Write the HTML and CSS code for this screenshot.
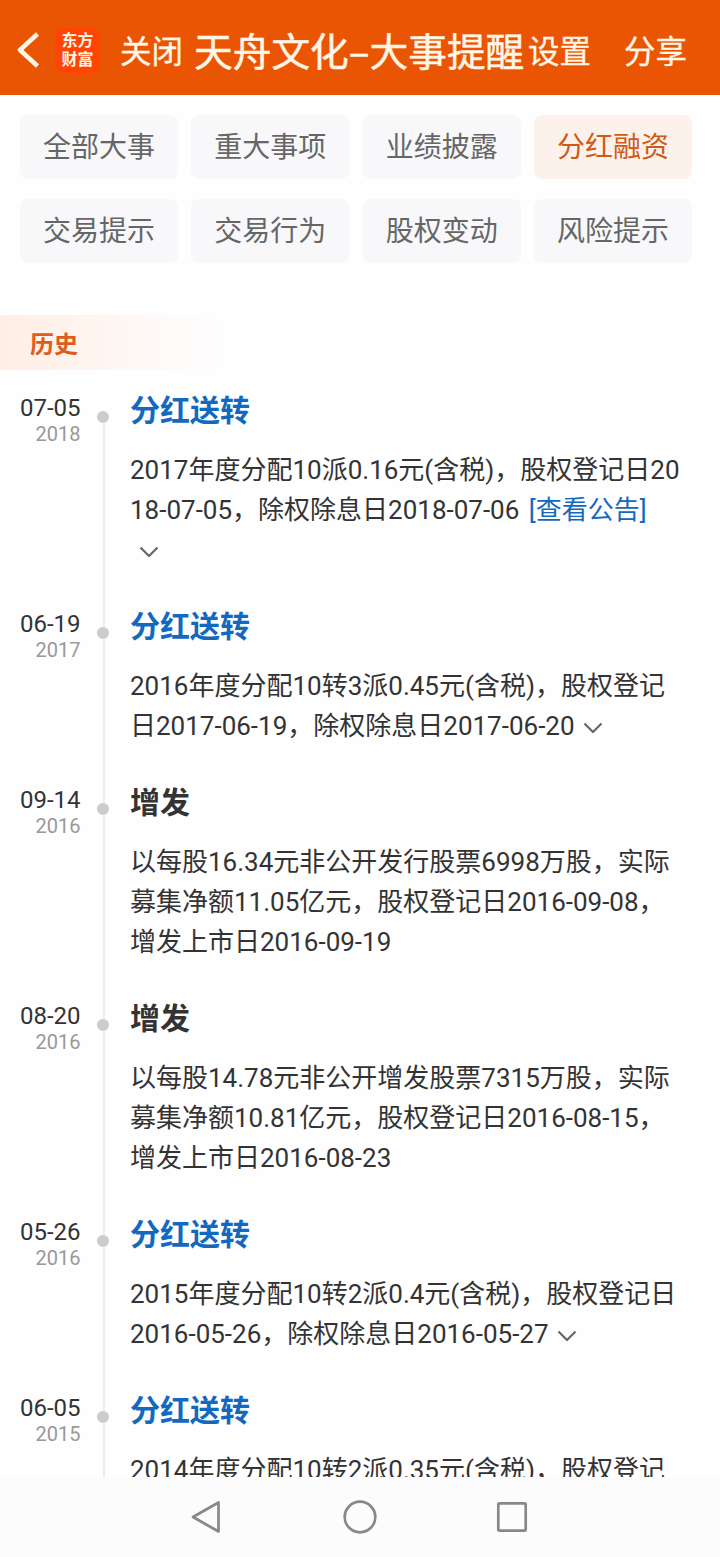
FILE: index.html
```html
<!DOCTYPE html>
<html lang="zh-CN">

<head>
    <meta charset="UTF-8">
    <meta name="viewport" content="width=device-width, initial-scale=1.0">
    <title>天舟文化–大事提醒</title>
    <link rel="stylesheet" href="styles.css">
</head>

<body>
    <header>
        <svg class="back" width="24" height="38" viewBox="0 0 24 38"><path d="M22.5 3L5 19L22.5 35"/></svg>
        <div class="logo"><span>东方</span><span>财富</span></div>
        <span class="close">关闭</span>
        <h1>天舟文化–大事提醒</h1>
        <span class="setting">设置</span>
        <span class="share">分享</span>
    </header>

    <main>
        <nav class="tabs">
            <a>全部大事</a>
            <a>重大事项</a>
            <a>业绩披露</a>
            <a class="active">分红融资</a>
            <a>交易提示</a>
            <a>交易行为</a>
            <a>股权变动</a>
            <a>风险提示</a>
        </nav>

        <h2 class="history">历史</h2>

        <div class="timeline">
            <section class="item">
                <div class="date">07-05<small>2018</small></div>
                <div class="axis"></div>
                <div class="content">
                    <h3 class="link">分红送转</h3>
                    <p>2017年度分配10派0.16元(含税)，股权登记日20<br>18-07-05，除权除息日2018-07-06 <a>[查看公告]</a><br><svg class="more" width="20" height="12" viewBox="0 0 20 12"><path d="M1.5 1.5L10 10L18.5 1.5"/></svg></p>
                </div>
            </section>
            <section class="item">
                <div class="date">06-19<small>2017</small></div>
                <div class="axis"></div>
                <div class="content">
                    <h3 class="link">分红送转</h3>
                    <p>2016年度分配10转3派0.45元(含税)，股权登记<br>日2017-06-19，除权除息日2017-06-20<svg class="more" width="20" height="12" viewBox="0 0 20 12"><path d="M1.5 1.5L10 10L18.5 1.5"/></svg></p>
                </div>
            </section>
            <section class="item">
                <div class="date">09-14<small>2016</small></div>
                <div class="axis"></div>
                <div class="content">
                    <h3>增发</h3>
                    <p>以每股16.34元非公开发行股票6998万股，实际<br>募集净额11.05亿元，股权登记日2016-09-08，<br>增发上市日2016-09-19</p>
                </div>
            </section>
            <section class="item">
                <div class="date">08-20<small>2016</small></div>
                <div class="axis"></div>
                <div class="content">
                    <h3>增发</h3>
                    <p>以每股14.78元非公开增发股票7315万股，实际<br>募集净额10.81亿元，股权登记日2016-08-15，<br>增发上市日2016-08-23</p>
                </div>
            </section>
            <section class="item">
                <div class="date">05-26<small>2016</small></div>
                <div class="axis"></div>
                <div class="content">
                    <h3 class="link">分红送转</h3>
                    <p>2015年度分配10转2派0.4元(含税)，股权登记日<br>2016-05-26，除权除息日2016-05-27<svg class="more" width="20" height="12" viewBox="0 0 20 12"><path d="M1.5 1.5L10 10L18.5 1.5"/></svg></p>
                </div>
            </section>
            <section class="item">
                <div class="date">06-05<small>2015</small></div>
                <div class="axis"></div>
                <div class="content">
                    <h3 class="link">分红送转</h3>
                    <p>2014年度分配10转2派0.35元(含税)，股权登记</p>
                </div>
            </section>
        </div>
    </main>

    <footer>
        <svg width="34" height="36" viewBox="0 0 34 36"><path d="M27.5 3.5V32.5L2 18Z"/></svg>
        <svg width="36" height="36" viewBox="0 0 36 36"><circle cx="18" cy="18" r="15.3"/></svg>
        <svg width="34" height="36" viewBox="0 0 34 36"><rect x="3.3" y="4.3" width="27.4" height="27.4" rx="1"/></svg>
    </footer>
</body>

</html>
```

FILE: styles.css
```css
body {
    font-family: Roboto, 'Noto Sans CJK SC', sans-serif;
    background-color: #fefefe;
    color: #333;
    margin: 0;
    display: flex;
    flex-direction: column;
    height: 1557px;
    overflow: hidden;
}

header {
    display: flex;
    align-items: center;
    flex-shrink: 0;
    height: 95px;
    padding: 2px 0 0 15px;
    box-sizing: border-box;
    background-color: #ea5504;
    color: #fff6e6;
    font-family: 'Noto Sans CJK SC', sans-serif;
    font-size: 31.5px;
    white-space: nowrap;
    -webkit-text-stroke: 0.3px #fff6e6;
}

svg {
    fill: none;
    stroke-linejoin: round;
}

.back {
    margin-top: 3px;
    stroke: #fff6e6;
    stroke-width: 4.5;
}

.logo {
    display: flex;
    flex-direction: column;
    align-items: center;
    justify-content: center;
    width: 45px;
    height: 45px;
    margin: 3px 0 0 16px;
    border-radius: 9px;
    background-color: #ff4403;
    font-size: 16px;
    font-weight: 700;
    line-height: 19px;
    -webkit-text-stroke: 0;
}

.logo span {
    position: relative;
    top: -1px;
}

.close {
    margin-left: 20px;
}

h1 {
    margin: 0 0 0 11px;
    font-size: 38.7px;
    font-weight: 400;
    width: 334px;
    -webkit-text-stroke: 0.5px #fff6e6;
}

.share {
    margin-left: 33px;
}

main {
    flex: 1;
    min-height: 0;
    overflow: hidden;
}

.tabs {
    display: grid;
    grid-template-columns: repeat(4, 158px);
    justify-content: space-between;
    row-gap: 20px;
    padding: 20px 28px 0 20px;
}

.tabs a {
    height: 64px;
    line-height: 66px;
    border-radius: 8px;
    background-color: #f8f8fa;
    color: #666;
    font-size: 28px;
    text-align: center;
}

.tabs .active {
    background-color: #fdf1eb;
    color: #cf5a18;
}

.history {
    width: 220px;
    height: 55px;
    margin: 52px 0 20px;
    padding-left: 30px;
    box-sizing: border-box;
    background: linear-gradient(to right, #ffeee5, #fefefe);
    color: #dc5d1c;
    font-size: 24px;
    font-weight: 700;
    line-height: 61px;
}

.item {
    display: flex;
    padding-bottom: 36px;
    position: relative;
}

.date {
    width: 80.5px;
    padding-top: 4px;
    font-size: 24px;
    line-height: 28px;
    text-align: right;
}

.date small {
    display: block;
    color: #999;
    font-size: 20px;
    line-height: 24px;
}

.axis {
    width: 12px;
    height: 12px;
    margin: 21px 21px 0 16.5px;
    border-radius: 50%;
    background-color: #ccc;
}

/* line running down to the next dot */
.axis::after {
    content: '';
    position: absolute;
    top: 33px;
    bottom: -21px;
    left: 103px;
    width: 2px;
    background-color: #ededed;
}

h3 {
    margin: 0 0 18px;
    font-size: 30px;
    line-height: 42px;
}

h3.link,
p a {
    color: #1269bf;
}

p {
    margin: 0;
    font-size: 26px;
    line-height: 40px;
    white-space: nowrap;
}

p a {
    margin-left: 3px;
}

.more {
    margin: 0 0 1px 8.5px;
    stroke: #666;
    stroke-width: 2.2;
}

footer {
    display: flex;
    align-items: center;
    justify-content: center;
    gap: 117px;
    flex-shrink: 0;
    height: 80px;
    background-color: #fcfcfc;
}

footer svg {
    stroke: #888;
    stroke-width: 2.7;
}
```
